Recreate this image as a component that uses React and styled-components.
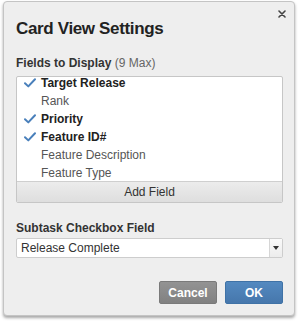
import React from "react";
import styled, { createGlobalStyle } from "styled-components";

const Global = createGlobalStyle`
  html, body { margin: 0; padding: 0; background: #ffffff; }
  body { font-family: "Liberation Sans", Arial, sans-serif; }
  * { box-sizing: border-box; }
`;

const Page = styled.div`
  width: 300px;
  height: 322px;
  padding: 1px 5px 0 3px;
`;

const Dialog = styled.div`
  position: relative;
  width: 292px;
  height: 315px;
  background: #eeeeee;
  border: 1px solid #c4c4c4;
  border-radius: 4px;
  box-shadow: 0 2px 3px rgba(0, 0, 0, 0.35);
  padding: 16px 11px 0 12px;
  display: flex;
  flex-direction: column;
`;

const Close = styled.button`
  position: absolute;
  top: 6px;
  right: 6px;
  width: 12px;
  height: 12px;
  padding: 0;
  border: none;
  background: transparent;
  display: flex;
  align-items: center;
  justify-content: center;
`;

const Title = styled.h1`
  margin: 0;
  font-size: 17px;
  font-weight: bold;
  letter-spacing: -0.35px;
  color: #222;
  line-height: 22px;
`;

const Label = styled.div`
  margin-top: ${(p) => p.$top}px;
  font-size: 12px;
  font-weight: bold;
  color: #333;
  line-height: 14px;
`;

const Muted = styled.span`
  font-weight: normal;
  color: #666;
`;

const FieldBox = styled.div`
  margin-top: 6px;
  border: 1px solid #c6c6c6;
  border-radius: 2px;
  background: #ffffff;
  overflow: hidden;
`;

const List = styled.div`
  height: 104px;
  overflow: hidden;
`;

const ListInner = styled.div`
  margin-top: -3px;
`;

const Row = styled.div`
  height: 18px;
  display: grid;
  grid-template-columns: 24px 1fr;
  align-items: center;
  font-size: 12px;
  color: ${(p) => (p.$on ? "#222" : "#555")};
  font-weight: ${(p) => (p.$on ? "bold" : "normal")};
`;

const Check = styled.span`
  display: flex;
  justify-content: center;
  padding-left: 2px;
`;

const AddField = styled.div`
  height: 21px;
  border-top: 1px solid #cfcfcf;
  background: linear-gradient(#ececec, #dedede);
  display: flex;
  align-items: center;
  justify-content: center;
  font-size: 12px;
  color: #333;
`;

const Select = styled.div`
  margin-top: 3px;
  height: 20px;
  border: 1px solid #cdcdcd;
  border-radius: 2px;
  background: #fff;
  display: grid;
  grid-template-columns: 1fr 13px;
  font-size: 12px;
  color: #333;
`;

const SelectValue = styled.div`
  display: flex;
  align-items: center;
  padding-left: 4px;
`;

const Arrow = styled.div`
  border-left: 1px solid #d6d6d6;
  background: linear-gradient(#fafafa, #ececec);
  display: flex;
  align-items: center;
  justify-content: center;
`;

const Footer = styled.div`
  margin-top: 23px;
  display: flex;
  justify-content: flex-end;
  gap: 8px;
`;

const Button = styled.button`
  width: 58px;
  height: 23px;
  border: 1px solid ${(p) => (p.$primary ? "#3f72a6" : "#7a7a7a")};
  border-radius: 2px;
  background: ${(p) =>
    p.$primary
      ? "linear-gradient(#5389c0, #4677ac)"
      : "linear-gradient(#939393, #818181)"};
  color: #fff;
  font-family: "Liberation Sans", Arial, sans-serif;
  font-size: 12px;
  font-weight: bold;
  padding: 0;
`;

const CheckIcon = () => (
  <svg width="12" height="10" viewBox="0 0 12 10">
    <path d="M1 5.2 L4.3 8.4 L11 1.2" fill="none" stroke="#4a80bb" strokeWidth="2" strokeLinecap="round" strokeLinejoin="round" />
  </svg>
);

const fields = [
  ["Target Release", true],
  ["Rank", false],
  ["Priority", true],
  ["Feature ID#", true],
  ["Feature Description", false],
  ["Feature Type", false],
];

export default function App() {
  return (
    <Page>
      <Global />
      <Dialog>
        <Close aria-label="close">
          <svg width="8" height="8" viewBox="0 0 8 8">
            <path d="M1 1 L7 7 M7 1 L1 7" stroke="#444" strokeWidth="1.6" strokeLinecap="round" />
          </svg>
        </Close>
        <Title>Card View Settings</Title>
        <Label $top={16}>
          Fields to Display <Muted>(9 Max)</Muted>
        </Label>
        <FieldBox>
          <List>
            <ListInner>
              {fields.map(([name, on]) => (
                <Row key={name} $on={on}>
                  <Check>{on && <CheckIcon />}</Check>
                  <span>{name}</span>
                </Row>
              ))}
            </ListInner>
          </List>
          <AddField>Add Field</AddField>
        </FieldBox>
        <Label $top={18}>Subtask Checkbox Field</Label>
        <Select>
          <SelectValue>Release Complete</SelectValue>
          <Arrow>
            <svg width="6" height="4" viewBox="0 0 6 4">
              <path d="M0 0 H6 L3 4 Z" fill="#333" />
            </svg>
          </Arrow>
        </Select>
        <Footer>
          <Button>Cancel</Button>
          <Button $primary>OK</Button>
        </Footer>
      </Dialog>
    </Page>
  );
}
